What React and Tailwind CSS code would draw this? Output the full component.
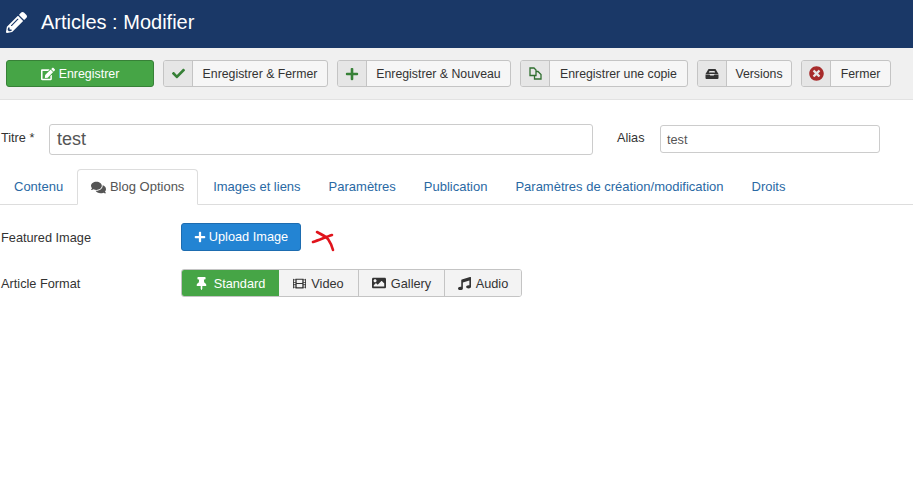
import React from 'react';
import {
  FaPencilAlt, FaCheck, FaPlus, FaTimesCircle, FaComments,
  FaThumbtack, FaFilm, FaImage, FaMusic, FaEdit,
} from 'react-icons/fa';

const CopyIcon = () => (
  <svg width="13" height="13" viewBox="0 0 13 13" fill="none" stroke="#2f6f2f" strokeWidth="1.3">
    <path d="M1 1h4l2 2v5.5H1z" />
    <path d="M7 4.5h2l3 3v4.5H5.5V8.5" />
  </svg>
);

const ArchiveIcon = () => (
  <svg width="14" height="10" viewBox="0 0 14 10" fill="#333">
    <path d="M3.5 0h7l3 5H.5z" />
    <path d="M.5 5.5h4l.8 1h3.4l.8-1h4V9q0 1-1 1h-11q-1 0-1-1z" />
    <path d="M4.5 2h5l.7 1.5H3.8z" fill="#e4e4e4" />
  </svg>
);

const toolbarButtons = [
  { label: 'Enregistrer & Fermer', w: 'w-[165px]', icon: <FaCheck className="text-[13px] text-[#378137]" /> },
  { label: 'Enregistrer & Nouveau', w: 'w-[174px]', icon: <FaPlus className="text-[14px] text-[#378137]" /> },
  { label: 'Enregistrer une copie', w: 'w-[168px]', icon: <CopyIcon /> },
  { label: 'Versions', w: 'w-[95px]', icon: <ArchiveIcon /> },
  { label: 'Fermer', w: 'w-[90px]', icon: <FaTimesCircle className="text-[15px] text-[#a72b2b]" /> },
];

const tabs = ['Images et liens', 'Paramètres', 'Publication', 'Paramètres de création/modification', 'Droits'];

const formats = [
  { label: 'Video', w: 'w-[79px]', icon: <FaFilm className="text-[13px]" /> },
  { label: 'Gallery', w: 'w-[86px]', icon: <FaImage className="text-[14px]" /> },
  { label: 'Audio', w: 'w-[77px]', icon: <FaMusic className="text-[13px]" /> },
];

const ToolbarButton = ({ label, w, icon }) => (
  <div className={`${w} h-[27px] flex rounded-[3px] border border-[#c4c4c4] bg-[#f6f6f6] overflow-hidden`}>
    <span className="w-[29px] shrink-0 flex items-center justify-center bg-[#e6e6e6] border-r border-[#c4c4c4]">
      {icon}
    </span>
    <span className="flex-1 text-center leading-[27px] text-[12.3px] text-[#333]">{label}</span>
  </div>
);

const App = () => {
  return (
    <div className="w-[913px] h-[497px] bg-white overflow-hidden font-['Liberation_Sans',Arial,sans-serif]">

      {/* HEADER */}
      <div className="h-[48px] bg-[#1a3867] flex items-center pl-[6px] text-white">
        <FaPencilAlt className="text-[21px] mr-[14px] mb-[4px]" />
        <h1 className="text-[20px] leading-none mb-[5px]">Articles : Modifier</h1>
      </div>

      {/* TOOLBAR */}
      <div className="h-[52px] bg-[#f0f0f0] border-b border-[#e2e2e2] flex items-start pt-[12px] pl-[6px] gap-[9px]">
        <div className="w-[148px] h-[27px] flex items-center justify-center gap-[4px] rounded-[3px] bg-[#46a546] border border-[#378137] text-white text-[12.4px]">
          <FaEdit className="text-[14px]" />
          <span className="mt-px">Enregistrer</span>
        </div>
        {toolbarButtons.map((b) => (
          <ToolbarButton key={b.label} {...b} />
        ))}
      </div>

      {/* TITLE ROW */}
      <div className="flex items-center h-[32px] mt-[23px] text-[12.7px] text-[#333]">
        <label className="w-[49px] pl-[1px]">Titre *</label>
        <div className="w-[544px] h-[31px] rounded-[3px] border border-[#ccc] pl-[7px] text-[18px] leading-[29px] text-[#555]">test</div>
        <label className="ml-[24px] w-[43px]">Alias</label>
        <div className="w-[220px] h-[28px] rounded-[3px] border border-[#ccc] pl-[6px] leading-[28px] text-[#555]">test</div>
      </div>

      {/* TABS */}
      <div className="flex items-end h-[36px] mt-[14px] border-b border-[#ddd] pl-[14px] text-[13px] text-[#2a69a4]">
        <span className="h-[35px] leading-[36px] mr-[14px]">Contenu</span>
        <span className="w-[121px] h-[36px] -mb-px bg-white border border-[#ddd] border-b-white rounded-t-[4px] flex items-center justify-center gap-[4px] text-[#555]">
          <FaComments className="text-[15px]" />
          Blog Options
        </span>
        {tabs.map((t, i) => (
          <span key={t} className={`h-[35px] leading-[36px] ${i === 0 ? 'ml-[15px]' : 'ml-[28px]'}`}>{t}</span>
        ))}
      </div>

      {/* BLOG OPTIONS */}
      <div className="flex items-center h-[28px] mt-[18px] text-[12.75px] text-[#333]">
        <label className="w-[181px] pl-[1px] mt-[2px]">Featured Image</label>
        <div className="w-[120px] h-[28px] flex items-center justify-center gap-[3px] rounded-[3px] bg-[#2384d3] border border-[#1d6cb0] text-white">
          <FaPlus className="text-[12px]" />
          <span>Upload Image</span>
        </div>
        <svg className="ml-[10px] mt-[8px]" width="26" height="22" viewBox="0 0 26 22" fill="none" stroke="#e0141c" strokeWidth="2.6" strokeLinecap="round">
          <path d="M2 12C8 10 15 7 21 5" />
          <path d="M6 2c4 2 8 4 11 7 2 3 4 6 5 11" />
        </svg>
      </div>

      <div className="flex items-center h-[28px] mt-[18px] text-[12.75px] text-[#333]">
        <label className="w-[181px] pl-[1px] mt-[2px]">Article Format</label>
        <div className="flex h-[28px] rounded-[3px] overflow-hidden border border-[#c4c4c4]">
          <span className="w-[98px] -my-px -ml-px flex items-center justify-center gap-[6px] bg-[#46a546] text-white">
            <FaThumbtack className="text-[13px]" />
            <span className="mt-px">Standard</span>
          </span>
          {formats.map((f, i) => (
            <span key={f.label} className={`${f.w} flex items-center justify-center gap-[5px] bg-[#f3f3f3] ${i > 0 ? 'border-l border-[#c4c4c4]' : ''}`}>
              {f.icon}
              <span className="mt-px">{f.label}</span>
            </span>
          ))}
        </div>
      </div>
    </div>
  );
};

export default App;
